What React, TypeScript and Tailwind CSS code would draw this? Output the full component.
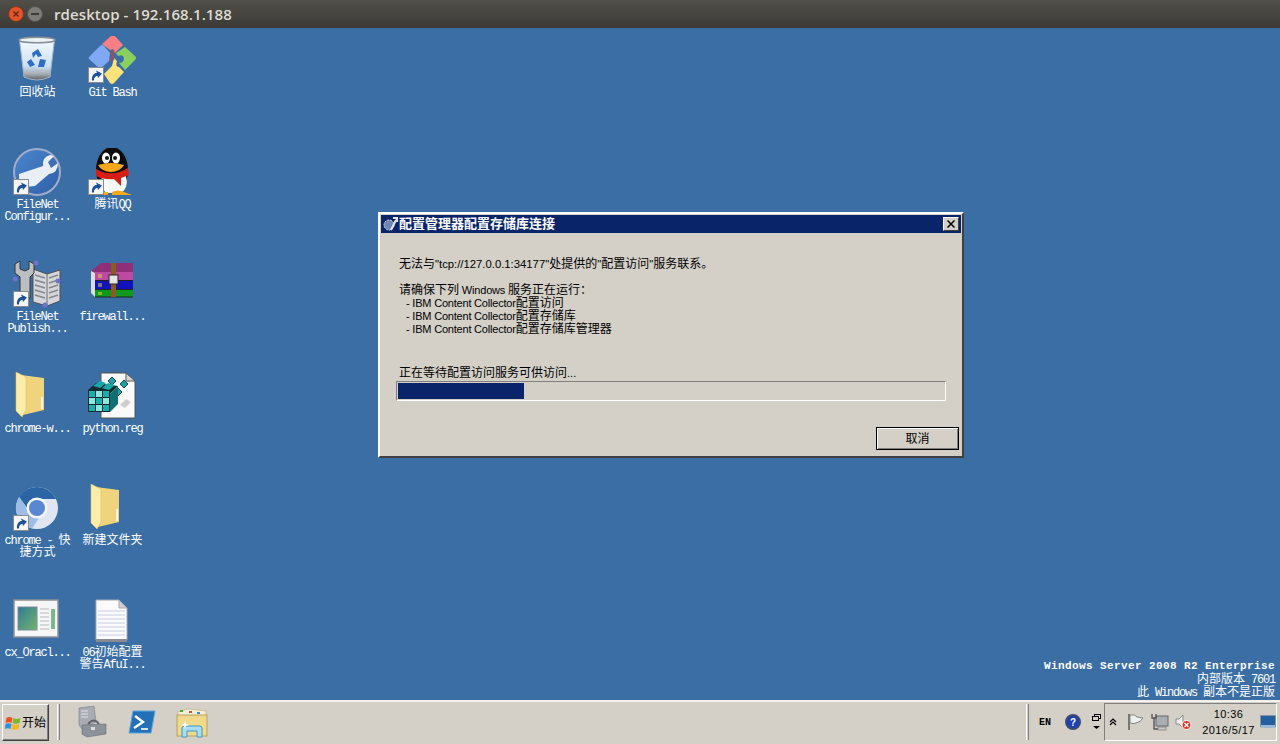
import type { ReactNode } from "react"

const MONO = '"Liberation Mono", "Noto Sans CJK SC", monospace'
const UI = '"Liberation Sans", "Noto Sans CJK SC", sans-serif'

// Latin and CJK runs have different sizes in the bitmap fonts of the screenshot
const Mixed = ({ text, latin }: { text: string; latin: string }) => (
  <>
    {text.split(/([\u3000-\u303f\u4e00-\u9fff\uff00-\uffef]+)/).map((part, i) =>
      i % 2 === 1 ? <span key={i}>{part}</span> : <span key={i} className={latin}>{part}</span>,
    )}
  </>
)

const Shortcut = () => (
  <svg viewBox="0 0 16 16" className="absolute bottom-px left-0 h-4 w-4">
    <rect x="0.5" y="0.5" width="15" height="15" fill="#f6f6f6" stroke="#8a8a8a" />
    <path d="M4 13.5 C3.5 8.5 6 6 9 6 L8 3.5 L14 6.5 L10 11 L9.5 8.8 C7.5 9 6 10.5 5.8 13.5 Z" fill="#1a4f9c" />
  </svg>
)

const RecycleBin = () => (
  <svg viewBox="0 0 48 48" className="h-12 w-12">
    <defs>
      <linearGradient id="bin" x1="0" x2="0" y1="0" y2="1">
        <stop offset="0" stopColor="#f4f9fe" />
        <stop offset="0.65" stopColor="#cbe0f4" />
        <stop offset="0.85" stopColor="#a6adb3" />
        <stop offset="1" stopColor="#5d6266" />
      </linearGradient>
    </defs>
    <path d="M6.5 4 L41.5 4 L37 41 Q24 47 11 41 Z" fill="url(#bin)" stroke="#a3b3c1" />
    <ellipse cx="24" cy="4" rx="18" ry="2.8" fill="#eef2f5" stroke="#858e96" strokeWidth="1.5" />
    <path d="M19 17 L25 13 L29 20 L25 21 L23 18 L20 22 Z M14 26 L18 23 L22 29 L17 31 Z M27 23 L33 24 L31 31 L25 31 Z" fill="#2d6fc4" />
  </svg>
)

const GitBash = () => (
  <div className="relative h-12 w-12">
    <svg viewBox="0 0 48 48" className="h-12 w-12">
      <path d="M23 0 Q25 -2 27 0 L35 9 L27 17 L25 13 L22 14 L14 8 Z" fill="#f77f83" />
      <path d="M1 21 L12 10 Q14 8 16 10 L22 17 L21 25 L12 33 L1 23 Q0 22 1 21 Z" fill="#7fa9f5" />
      <path d="M37 11 L47 20 Q49 22 47 24 L37 34 L31 27 Q36 27 36 22 Q35 18 30 20 L28 17 Z" fill="#8ad05e" />
      <path d="M26 22 L29 25 Q27 31 31 31 L36 36 L26 47 Q24 49 22 47 L16 38 L24 30 Z" fill="#fde27a" />
      <path d="M22 14 L26 24 M26 14 L22 26" stroke="#d23b3b" strokeWidth="1" />
    </svg>
    <Shortcut />
  </div>
)

const FileNetConfig = () => (
  <div className="relative h-12 w-12">
    <svg viewBox="0 0 48 48" className="h-12 w-12">
      <defs>
        <linearGradient id="fn" x1="0" x2="1" y1="0" y2="1">
          <stop offset="0" stopColor="#4b86cf" />
          <stop offset="1" stopColor="#2f5fa5" />
        </linearGradient>
      </defs>
      <circle cx="24" cy="24" r="23" fill="url(#fn)" stroke="#a3acc8" strokeWidth="2" />
      <path d="M6 26 L30 18 Q29 9 37 7 L41 8 L35 14 L38 20 L45 15 Q45 25 36 26 L22 38 L12 39 Q5 34 6 26 Z" fill="#e9eef7" />
    </svg>
    <Shortcut />
  </div>
)

const Penguin = () => (
  <div className="relative h-12 w-12">
    <svg viewBox="0 0 48 48" className="h-12 w-12">
      <ellipse cx="24" cy="22" rx="16" ry="23" fill="#0c0c0c" />
      <path d="M14 28 Q26 24 38 28 Q41 40 33 45 L18 45 Q11 38 14 28 Z" fill="#fafafa" />
      <ellipse cx="18" cy="10" rx="4" ry="5.5" fill="#fff" />
      <ellipse cx="28" cy="10" rx="4" ry="5.5" fill="#fff" />
      <circle cx="19" cy="10" r="2" fill="#111" />
      <circle cx="27" cy="10" r="2" fill="#111" />
      <path d="M10 17 Q23 13 36 17 Q32 24 23 24 Q14 24 10 17 Z" fill="#f5a81c" />
      <path d="M8 21 Q24 30 40 20 L41 27 L33 30 L33 38 L26 31 Q16 32 8 28 Z" fill="#d81e14" />
      <path d="M24 44 Q30 41 36 44 L44 47 L24 47 Z M8 44 L20 44 L20 47 L10 47 Z" fill="#f5a81c" />
    </svg>
    <Shortcut />
  </div>
)

const FileNetPublish = () => (
  <div className="relative h-12 w-12">
    <svg viewBox="0 0 48 48" className="h-12 w-12">
      <path d="M20 9 L34 14 L47 10 L47 41 L34 46 L20 42 Z" fill="#d4d6d9" stroke="#4e4e55" />
      <path d="M34 14 V46" stroke="#6e7075" />
      <path d="M22 15 L32 18 M22 20 L32 23 M22 25 L32 28 M22 30 L32 33 M22 35 L32 38 M36 18 L45 15 M36 23 L45 20 M36 28 L45 25 M36 33 L45 30 M36 38 L45 35" stroke="#85888c" strokeWidth="1.5" />
      <path d="M7 1 L7 9 L12 11 L16 9 L16 1 L21 4 L21 13 L17 17 L17 38 L7 38 L7 17 L2 13 L2 4 Z" fill="#bcbfc2" stroke="#35353a" />
      <circle cx="2" cy="19" r="2.5" fill="#6f72c9" />
      <circle cx="23" cy="3" r="2.5" fill="#6f72c9" />
      <circle cx="45" cy="21" r="2.5" fill="#6f72c9" />
      <circle cx="32" cy="45" r="2.5" fill="#6f72c9" />
    </svg>
    <Shortcut />
  </div>
)

const WinRar = () => (
  <svg viewBox="0 0 48 48" className="h-12 w-12">
    <path d="M3 11 L13 3 L45 3 L45 12 L6 13 Z" fill="#8f2f78" />
    <rect x="7" y="12" width="38" height="8" fill="#bd4aa0" />
    <rect x="7" y="21" width="38" height="8" fill="#1313bd" />
    <rect x="7" y="30" width="38" height="7" fill="#0f9a1e" />
    <path d="M3 11 L7 13 L7 37 L3 33 Z" fill="#dcdcdc" />
    <path d="M7 20.5 H45 M7 29.5 H45 M7 37 H45" stroke="#222" />
    <path d="M11 14 V18 M13 14 V18 M11 23 V27 M13 23 V27 M11 32 V35 M13 32 V35" stroke="#e8d84a" />
    <rect x="23" y="3" width="5" height="34" fill="#8a5a22" />
    <rect x="21" y="15" width="9" height="9" fill="#e5e5e5" stroke="#222" />
  </svg>
)

const Folder = () => (
  <svg viewBox="0 0 48 48" className="h-12 w-12">
    <path d="M8 3 L31 6 L31 38 L10 43 Z" fill="#efd37d" />
    <path d="M3 0 L13 5 L13 38 L9 45 L3 39 Z" fill="#fcedab" stroke="#d8bf6c" strokeWidth="0.6" />
    <path d="M29 25 V37" stroke="#fdfdfd" strokeWidth="1.5" />
  </svg>
)

const regTiles = [
  [1, 16], [8, 16], [15, 16],
  [1, 23], [8, 23], [15, 23],
  [1, 30], [8, 30], [15, 30],
]

const RegFile = () => (
  <svg viewBox="0 0 48 48" className="h-12 w-12">
    <path d="M13 1 L38 1 L47 9 L47 46 L13 46 Z" fill="#fafafa" stroke="#555" />
    <path d="M38 1 L38 9 L47 9 Z" fill="#d8d8d8" stroke="#555" />
    <path d="M24 5 L28 9 L24 13 L20 9 Z M36 8 L40 12 L36 16 L32 12 Z M30 16 L34 20 L30 24 L26 20 Z" fill="#1f9fa5" stroke="#0b4f56" />
    <path d="M0 18 L8 11 L30 14 L22 22 L22 40 L0 40 Z" fill="#0c2e30" />
    <path d="M22 22 L30 14 L30 32 L22 40 Z" fill="#0f6e72" />
    <path d="M5 14 L12 9 L18 11 L12 16 Z M14 16 L20 11 L27 13 L21 18 Z" fill="#18a8a8" />
    {regTiles.map(([x, y], i) => (
      <rect key={i} x={x} y={y + 3} width="6" height="6" fill={i % 2 ? "#8fe5df" : "#18aeae"} />
    ))}
    <path d="M38 27 L43 30 L37 36 L32 33 Z" fill="#cfcfcf" />
  </svg>
)

const Chrome = () => (
  <div className="relative h-12 w-12">
    <svg viewBox="0 0 48 48" className="h-12 w-12">
      <circle cx="24" cy="24" r="21" fill="#dfe6f2" />
      <path d="M24 3 A21 21 0 0 0 6 13 L17 28 L23 15 L43 15 A21 21 0 0 0 24 3 Z" fill="#2c65a6" />
      <path d="M6 13 A21 21 0 0 0 19 44.5 L26 34 L17 28 Z" fill="#9dbde8" />
      <circle cx="24" cy="24" r="10.5" fill="#f4f6fa" />
      <circle cx="24" cy="24" r="8" fill="#5a88d0" />
    </svg>
    <Shortcut />
  </div>
)

const Doc = () => (
  <svg viewBox="0 0 48 48" className="h-12 w-12">
    <defs>
      <linearGradient id="doc" x1="0" x2="1" y1="0" y2="1">
        <stop offset="0" stopColor="#2e7a96" />
        <stop offset="1" stopColor="#74b66c" />
      </linearGradient>
    </defs>
    <rect x="1" y="4" width="44" height="37" fill="#f6f6f6" stroke="#8f8f97" strokeWidth="1.5" />
    <rect x="5" y="11" width="19" height="23" fill="url(#doc)" stroke="#7d8aa0" />
    <path d="M27 13 H36 M27 17 H36 M27 21 H36 M27 25 H36 M27 29 H36 M27 33 H36" stroke="#b8b8b8" />
    <rect x="38" y="13" width="4" height="20" fill="#7ab98b" />
  </svg>
)

const TextFile = () => (
  <svg viewBox="0 0 48 48" className="h-12 w-12">
    <path d="M8 4 L31 4 L39 12 L39 44 L8 44 Z" fill="#fbfbfd" stroke="#a9a9b2" />
    <path d="M31 4 L31 12 L39 12 Z" fill="#cfcfd6" stroke="#a9a9b2" />
    <path d="M10 15 H37 M10 19 H37 M10 23 H37 M10 27 H37 M10 31 H37 M10 35 H37 M10 39 H37" stroke="#c6cde0" />
    <rect x="8" y="43" width="31" height="3" fill="#8a8a92" />
  </svg>
)

const desktopIcons: { icon: ReactNode; label: string[] }[] = [
  { icon: <RecycleBin />, label: ["回收站"] },
  { icon: <GitBash />, label: ["Git Bash"] },
  { icon: <FileNetConfig />, label: ["FileNet", "Configur..."] },
  { icon: <Penguin />, label: ["腾讯QQ"] },
  { icon: <FileNetPublish />, label: ["FileNet", "Publish..."] },
  { icon: <WinRar />, label: ["firewall..."] },
  { icon: <Folder />, label: ["chrome-w..."] },
  { icon: <RegFile />, label: ["python.reg"] },
  { icon: <Chrome />, label: ["chrome - 快", "捷方式"] },
  { icon: <Folder />, label: ["新建文件夹"] },
  { icon: <Doc />, label: ["cx_Oracl..."] },
  { icon: <TextFile />, label: ["06初始配置", "警告AfuI..."] },
]

const DesktopIcon = ({ icon, label }: { icon: ReactNode; label: string[] }) => (
  <div className="flex h-[112px] w-[75px] flex-col items-center">
    <div className="mr-px h-12 w-12">{icon}</div>
    <div className="mt-[2px] flex flex-col items-center whitespace-nowrap text-[12px] leading-[12px] text-white" style={{ fontFamily: MONO }}>
      {label.map((line, i) => (
        <div key={i} className="h-3 pt-px">
          <Mixed text={line} latin="tracking-[-1.2px]" />
        </div>
      ))}
    </div>
  </div>
)

const StartLogo = () => (
  <svg viewBox="0 0 16 16" className="h-4 w-4">
    <path d="M1.5 3 Q4 1 7.5 3 L6.5 8 Q3.5 6.5 0.5 8 Z" fill="#e8501f" />
    <path d="M8.5 3 Q12 5 15.5 3 L14.5 8 Q11 9.5 7.5 8 Z" fill="#7ab828" />
    <path d="M0.5 9 Q3.5 7.5 6.5 9 L5.5 14 Q2.5 12.5 0 14 Z" fill="#2f8fd8" />
    <path d="M7.5 9 Q11 10.5 14.5 9 L13.5 14 Q10 15.5 6.5 14 Z" fill="#f5b81c" />
  </svg>
)

const ServerManager = () => (
  <svg viewBox="0 0 30 32" className="h-8 w-[30px]">
    <path d="M2 2 L17 0 L19 16 L5 23 L2 19 Z" fill="#a9adb3" stroke="#6b6f75" strokeWidth="0.5" />
    <path d="M4 5 H11 M4 8 H11 M4 11 H11" stroke="#e0e2e5" />
    <path d="M5 19 L29 18 L29 28 L10 31 L5 28 Z" fill="#8b929a" stroke="#5c6066" strokeWidth="0.5" />
    <path d="M11 18 Q17 11 22 18" fill="none" stroke="#5f646b" strokeWidth="2" />
    <rect x="14" y="21" width="4" height="3" fill="#d9dbde" />
  </svg>
)

const PowerShell = () => (
  <svg viewBox="0 0 28 24" className="h-6 w-7">
    <path d="M5 1 L27 1 L23 23 L1 23 Z" fill="#2170b8" stroke="#5aa5dc" />
    <path d="M7 6 L15 12 L6 18" fill="none" stroke="#fff" strokeWidth="2.4" />
    <path d="M13 19 H20" stroke="#fff" strokeWidth="1.6" />
  </svg>
)

const Explorer = () => (
  <svg viewBox="0 0 32 32" className="h-8 w-8">
    <path d="M2 5 L12 2 L30 4 L30 10 L2 10 Z" fill="#f6f0d8" stroke="#c0a868" strokeWidth="0.6" />
    <rect x="4" y="3" width="3" height="2" fill="#3fae3f" />
    <rect x="13" y="4" width="3" height="2" fill="#d64c3c" />
    <rect x="21" y="5" width="3" height="2" fill="#3f8fd8" />
    <rect x="1" y="8" width="30" height="21" fill="#f0d98a" stroke="#b89f5a" />
    <path d="M6 30 V21 Q6 19 9 19 H23 Q26 19 26 21 V30 H21 V24 H11 V30 Z" fill="#a8dcf2" stroke="#3f9ac8" />
    <path d="M9 14 L10 17 L13 18 L10 19 L9 22 L8 19 L5 18 L8 17 Z" fill="#fff" />
  </svg>
)

const Separator = () => <div className="h-9 w-[3px] border-r border-l border-r-[#808080] border-l-white" />

const trayFlag = (
  <svg viewBox="0 0 18 18" className="h-[18px] w-[18px]">
    <path d="M2 1 V17" stroke="#777" strokeWidth="2" />
    <path d="M3 2 Q8 1 10 4 L16 5 Q14 9 9 10 Q6 11 3 10 Z" fill="#f1f1ef" stroke="#808080" />
  </svg>
)

const trayNetwork = (
  <svg viewBox="0 0 18 18" className="h-[18px] w-[18px]">
    <rect x="5" y="3" width="12" height="10" fill="#a9aeb3" stroke="#666" />
    <path d="M1 1 V5 H5 V1 M3 5 V16 H8" fill="none" stroke="#555" strokeWidth="1.4" />
    <rect x="7" y="14" width="8" height="3" fill="#c7c9cb" stroke="#666" strokeWidth="0.6" />
  </svg>
)

const traySound = (
  <svg viewBox="0 0 18 18" className="h-[18px] w-[18px]">
    <path d="M1 6 H4 L8 2 V15 L4 11 H1 Z" fill="#eeeeee" stroke="#8a8a8a" />
    <circle cx="11.5" cy="12" r="4.5" fill="#d8372a" stroke="#fff" />
    <path d="M9.5 10 L13.5 14 M13.5 10 L9.5 14" stroke="#fff" strokeWidth="1.3" />
  </svg>
)

export default function App() {
  return (
    <div className="flex h-[744px] w-[1280px] flex-col overflow-hidden bg-[#3a6ea5]">
      {/* Ubuntu window bar */}
      <header className="flex h-7 shrink-0 items-center bg-gradient-to-b from-[#504f49] to-[#3b3a36] pl-2">
        <button className="flex h-4 w-4 items-center justify-center rounded-full border border-[#7a3a20] bg-[#e4542a] text-[#6b2a10]">
          <svg viewBox="0 0 8 8" className="h-2 w-2">
            <path d="M1.5 1.5 L6.5 6.5 M6.5 1.5 L1.5 6.5" stroke="currentColor" strokeWidth="1.5" />
          </svg>
        </button>
        <button className="ml-[3px] flex h-4 w-4 items-center justify-center rounded-full border border-[#555] bg-[#7d7c76]">
          <div className="h-[2px] w-2 bg-[#3c3b37]" />
        </button>
        <span className="ml-[11px] text-[15px] font-semibold tracking-[0.1px] text-[#dfdbd2]" style={{ fontFamily: '"Open Sans", sans-serif' }}>
          rdesktop - 192.168.1.188
        </span>
      </header>

      {/* Desktop */}
      <main className="relative flex min-h-0 flex-1 justify-between">
        <div className="grid grid-cols-[75px_75px] content-start pt-2">
          {desktopIcons.map((item, i) => (
            <DesktopIcon key={i} icon={item.icon} label={item.label} />
          ))}
        </div>

        <div className="flex flex-col items-end self-end pr-[5px] text-[12px] text-white" style={{ fontFamily: MONO }}>
          <div className="text-[11px] leading-[15px] font-bold tracking-[0.4px]">Windows Server 2008 R2 Enterprise</div>
          <div className="h-[13px] leading-[13px]">
            <Mixed text="内部版本 7601" latin="tracking-[-1.2px]" />
          </div>
          <div className="h-[13px] leading-[13px]">
            <Mixed text="此 Windows 副本不是正版" latin="tracking-[-1.2px]" />
          </div>
        </div>

        {/* Dialog */}
        <section
          className="absolute top-[184px] left-[378px] flex h-[246px] w-[586px] flex-col border-2 border-t-white border-r-[#404040] border-b-[#404040] border-l-white bg-[#d4d0c8] p-px text-[12px] text-black"
          style={{ fontFamily: UI }}
        >
          <div className="flex h-[18px] shrink-0 items-center bg-[#0a246a] pr-[2px] pl-px">
            <svg viewBox="0 0 16 16" className="h-4 w-4">
              <circle cx="7" cy="9" r="5" fill="#6d86b5" stroke="#d5dcea" strokeDasharray="2 1" />
              <path d="M9 14 L14 4 M11 2 L15 2 L15 6" stroke="#e8e8e8" strokeWidth="2" fill="none" />
            </svg>
            <span className="ml-px text-[13px] font-bold text-white">配置管理器配置存储库连接</span>
            <button className="ml-auto flex h-[14px] w-4 items-center justify-center border border-t-white border-r-[#404040] border-b-[#404040] border-l-white bg-[#d4d0c8]">
              <svg viewBox="0 0 8 8" className="h-2 w-2">
                <path d="M0.5 0.5 L7.5 7.5 M7.5 0.5 L0.5 7.5" stroke="#000" strokeWidth="1.5" />
              </svg>
            </button>
          </div>

          <div className="flex flex-1 flex-col pt-[25px] pl-[15px]">
            <p className="h-[13px] pl-[3px] leading-[13px]">
              <Mixed text={'无法与"tcp://127.0.0.1:34177"处提供的"配置访问"服务联系。'} latin="text-[11.3px]" />
            </p>
            <p className="mt-[13px] h-[13px] pl-[3px] leading-[13px]">
              <Mixed text="请确保下列 Windows 服务正在运行：" latin="text-[11px] tracking-[-0.2px]" />
            </p>
            <p className="h-[13px] pl-[10px] leading-[13px]">
              <Mixed text="- IBM Content Collector配置访问" latin="text-[11px] tracking-[-0.2px]" />
            </p>
            <p className="h-[13px] pl-[10px] leading-[13px]">
              <Mixed text="- IBM Content Collector配置存储库" latin="text-[11px] tracking-[-0.2px]" />
            </p>
            <p className="h-[13px] pl-[10px] leading-[13px]">
              <Mixed text="- IBM Content Collector配置存储库管理器" latin="text-[11px] tracking-[-0.2px]" />
            </p>
            <p className="mt-[31px] h-[13px] pl-[3px] leading-[13px]">
              <Mixed text="正在等待配置访问服务可供访问..." latin="text-[11px]" />
            </p>
            <div className="mt-px h-5 w-[550px] border border-t-[#808080] border-r-white border-b-white border-l-[#808080] p-px">
              <div className="h-full w-[126px] bg-[#0a246a]" />
            </div>
            <div className="mt-[26px] flex justify-end pr-[2px]">
              <button className="h-[23px] w-[83px] border border-black bg-[#d4d0c8] text-[12px] shadow-[inset_1px_1px_0_#fff,inset_-1px_-1px_0_#808080]">
                取消
              </button>
            </div>
          </div>
        </section>
      </main>

      {/* Taskbar */}
      <footer className="flex h-[44px] shrink-0 items-center border-t-2 border-t-[#f4f2ee] bg-[#d4d0c8] pb-[2px] text-black" style={{ fontFamily: UI }}>
        <button className="mt-px ml-[2px] flex h-[37px] w-[47px] items-center justify-center gap-px border border-t-white border-r-[#404040] border-b-[#404040] border-l-white text-[12px] shadow-[inset_-1px_-1px_0_#808080]">
          <StartLogo />
          开始
        </button>
        <div className="ml-2">
          <Separator />
        </div>
        <div className="ml-[17px] flex items-center">
          <ServerManager />
          <div className="ml-[21px]">
            <PowerShell />
          </div>
          <div className="ml-[20px] pt-[2px]">
            <Explorer />
          </div>
        </div>

        <div className="ml-auto flex items-center">
          <Separator />
          <span className="ml-[10px] w-3 text-[10px] font-bold" style={{ fontFamily: '"Liberation Mono", monospace' }}>
            EN
          </span>
          <div className="ml-[14px] flex h-4 w-4 items-center justify-center rounded-full border-2 border-[#3c4a70] bg-[#1c3fb8] text-[10px] font-bold text-white">?</div>
          <svg viewBox="0 0 9 16" className="ml-[11px] h-4 w-[9px]">
            <rect x="2.5" y="0.5" width="6" height="4" fill="none" stroke="#000" />
            <rect x="0.5" y="2.5" width="6" height="4" fill="#d4d0c8" stroke="#000" />
            <path d="M1 12 L8 12 L4.5 15 Z" fill="#000" />
          </svg>
          <div className="mr-[3px] ml-[3px] flex h-[38px] w-[173px] items-center border border-t-[#808080] border-r-white border-b-white border-l-[#808080] pl-1">
            <svg viewBox="0 0 8 8" className="h-2 w-2">
              <path d="M1 4 L4 1 L7 4 M1 7 L4 4 L7 7" fill="none" stroke="#000" strokeWidth="1.2" />
            </svg>
            <div className="ml-[10px] flex items-center gap-[6px]">
              {trayFlag}
              {trayNetwork}
              {traySound}
            </div>
            <div className="ml-2 flex w-[55px] flex-col items-center text-[11px] leading-[16px] tracking-[0.4px]" style={{ fontFamily: '"Liberation Sans", sans-serif' }}>
              <span>10:36</span>
              <span>2016/5/17</span>
            </div>
            <svg viewBox="0 0 16 14" className="ml-1 h-[14px] w-4">
              <rect x="0.5" y="0.5" width="15" height="11" fill="#235f9f" stroke="#8796a6" />
              <rect x="1" y="10" width="14" height="3" fill="#9bbad8" />
            </svg>
          </div>
        </div>
      </footer>
    </div>
  )
}
